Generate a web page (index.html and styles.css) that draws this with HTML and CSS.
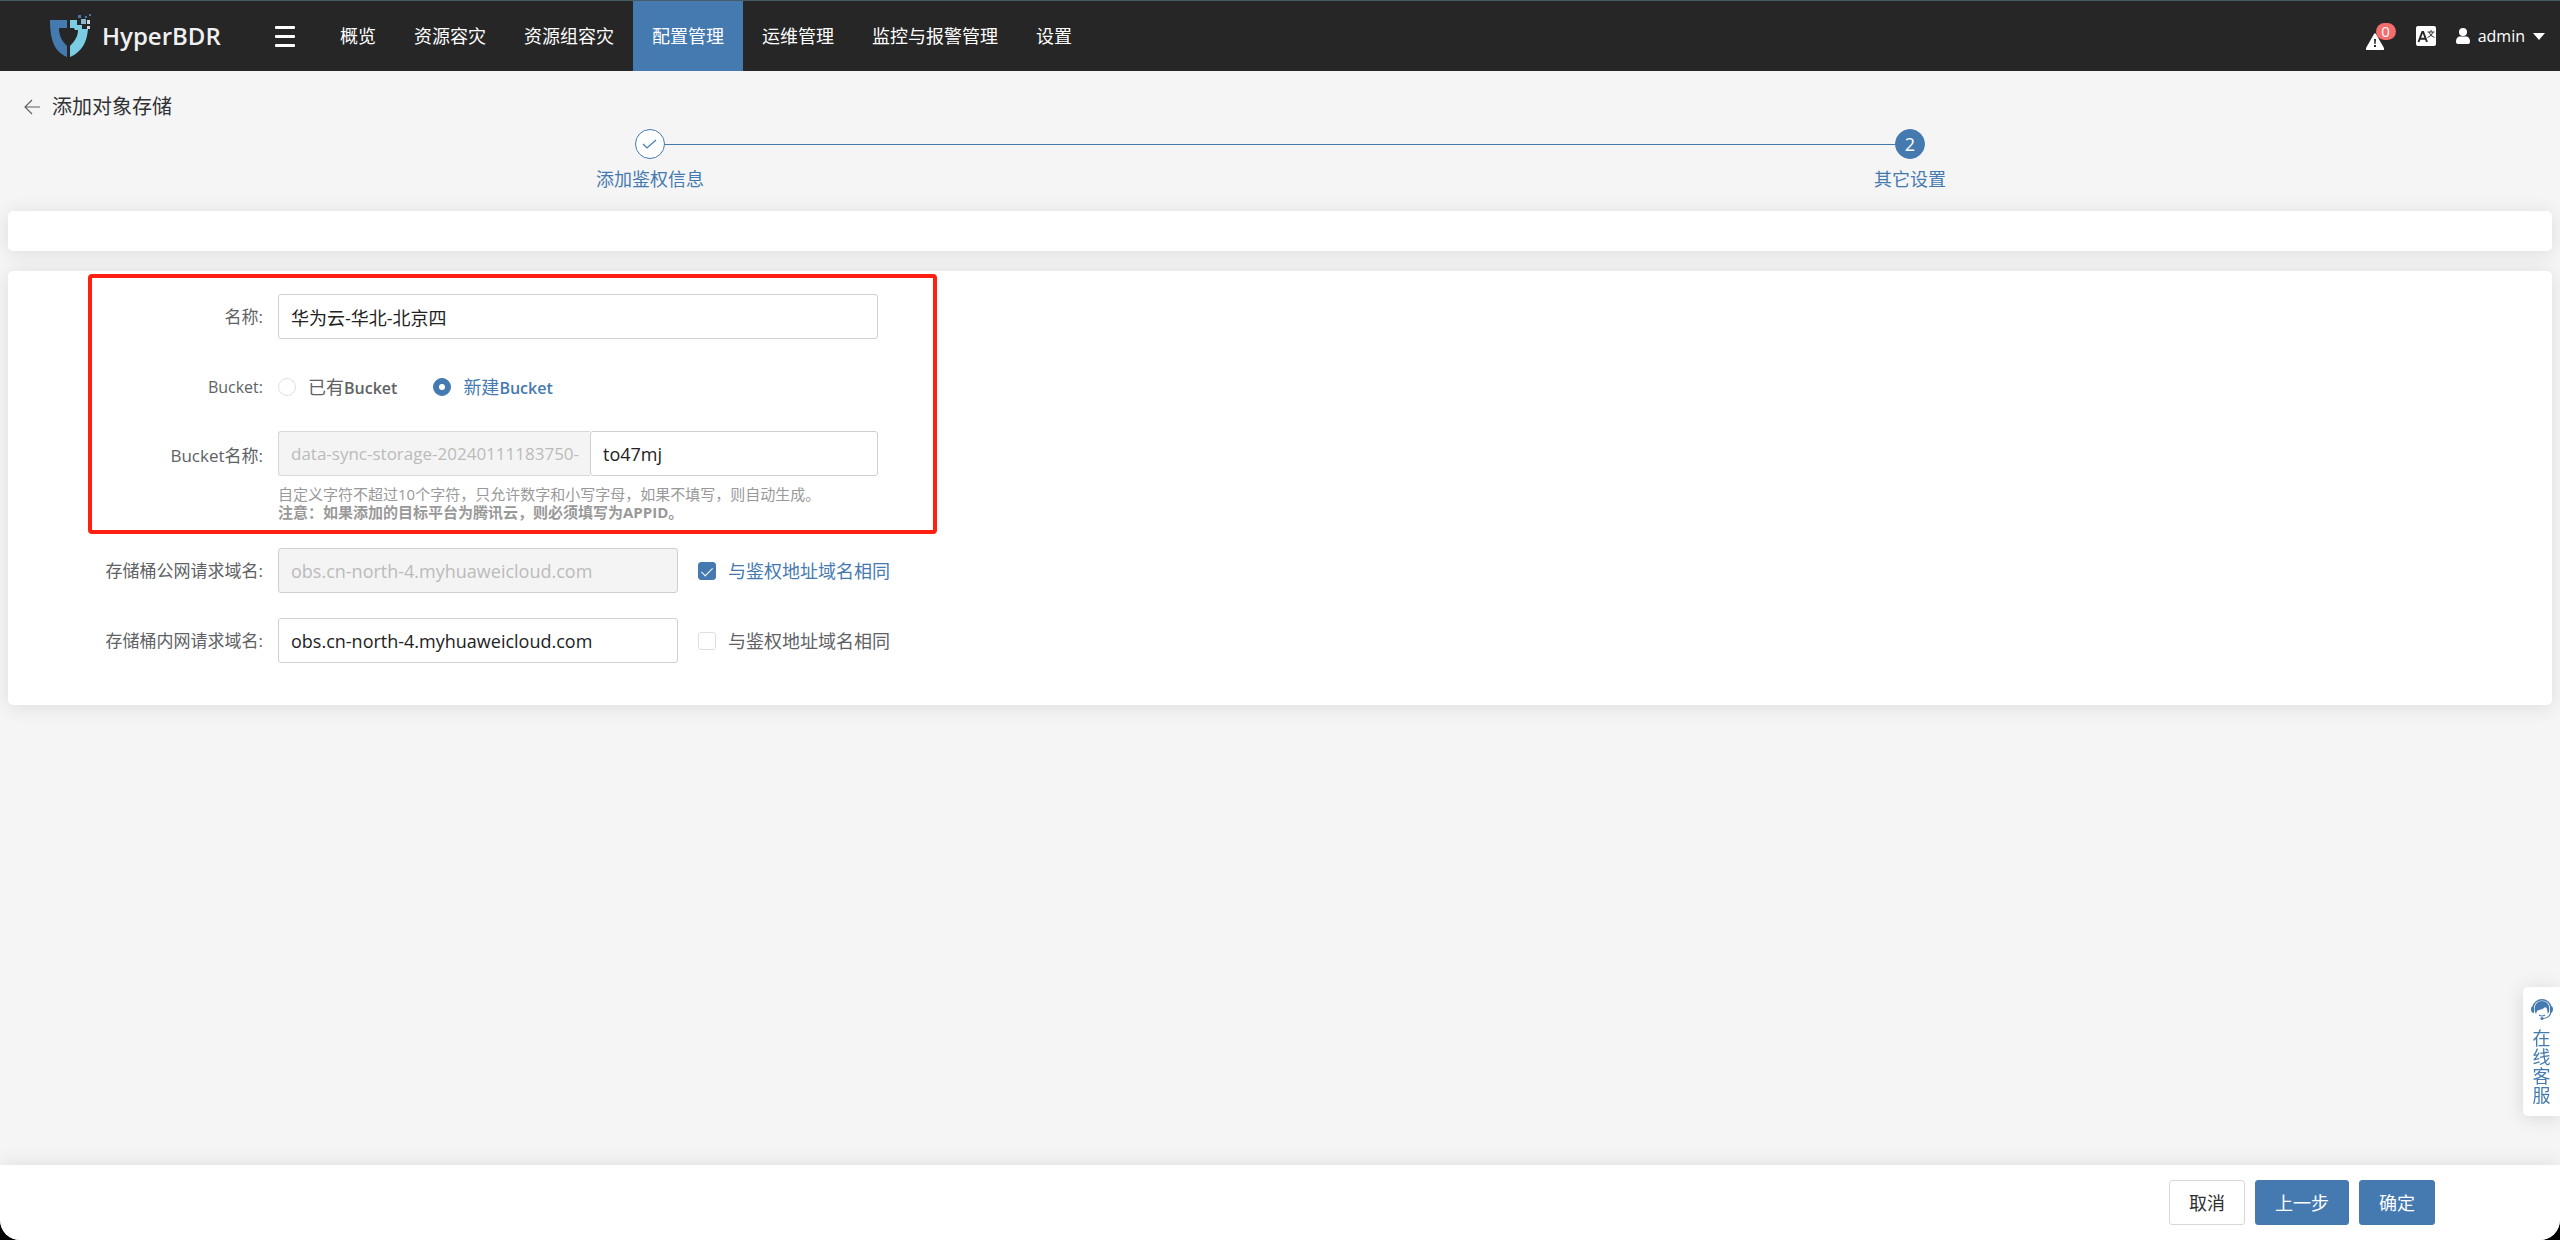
FILE: index.html
```html
<!DOCTYPE html>
<html lang="zh-CN">
<head>
<meta charset="utf-8">
<title>HyperBDR</title>
<link rel="stylesheet" href="styles.css">
</head>
<body>
<header class="topbar">
  <a class="brand" href="#">
    <svg class="brand-mark" viewBox="0 0 42 44" aria-hidden="true">
      <path fill="#457ab1" d="M1 6h17v8H10c0 8 3 13 8 18v11C6 38 1 27 1 6z"/>
      <path fill="#7bcde3" d="M21 6h7v5h5v4h6C38 28 33 38 21 43V32c5-5 8-10 8-16h-3l-1-2h-4z"/>
      <path fill="#8fb4cd" d="M32 5h5v5h-5z"/>
      <path fill="#457ab1" d="M29 1h3v3h-3zM36 2h2v2h-2zM40 0h2v2h-2z"/>
      <path fill="#c9d6e0" d="M38 6h3v4h-3zM38 12h3v3h-3z"/>
    </svg>
    <span class="brand-name">HyperBDR</span>
  </a>
  <button class="menu-toggle" type="button" aria-label="菜单"><span></span><span></span><span></span></button>
  <nav class="nav">
    <a href="#">概览</a>
    <a href="#">资源容灾</a>
    <a href="#">资源组容灾</a>
    <a class="active" href="#">配置管理</a>
    <a href="#">运维管理</a>
    <a href="#">监控与报警管理</a>
    <a href="#">设置</a>
  </nav>
  <div class="tools">
    <a class="alarm" href="#" aria-label="报警">
      <svg width="18" height="17" viewBox="0 0 18 17" aria-hidden="true"><path fill="#fff" d="M8 1q1-1.500 2 0l8 14q.5 2-1 2H1q-1.500 0-1-2z"/><path fill="#262626" d="M8 6h2l-.4 5H8.400zM8 12h2v2H8z"/></svg>
      <span class="badge">0</span>
    </a>
    <button class="lang" type="button" aria-label="语言">
      <svg width="20" height="20" viewBox="0 0 20 20" aria-hidden="true"><rect width="20" height="20" rx="2" fill="#fff"/><path d="M2.500 16L6.300 6h.9L11 16M4 12.800h5.500" fill="none" stroke="#262626" stroke-width="1.900"/><path d="M11.500 6h7M15 4v2M13 6q1 4 5.500 5.500M17 6q-1 4-5.500 5.500" fill="none" stroke="#262626" stroke-width=".9"/></svg>
    </button>
    <button class="user" type="button">
      <svg width="14" height="16" viewBox="0 0 14 16" aria-hidden="true"><circle cx="7" cy="4" r="4" fill="#fff"/><path fill="#fff" d="M0 14c0-4 2-5.500 4-5.500h6c2 0 4 1.500 4 5.500q0 2-2 2H2q-2 0-2-2z"/></svg>
      <span>admin</span>
      <svg width="12" height="7" viewBox="0 0 12 7" aria-hidden="true"><path fill="#fff" d="M0 0h12L6 7z"/></svg>
    </button>
  </div>
</header>

<main class="content">
  <div class="page-head">
    <a class="back" href="#" aria-label="返回"><svg width="16" height="16" viewBox="0 0 16 16" aria-hidden="true"><path d="M16 8H1M8 1L1 8l7 7" fill="none" stroke="#606266" stroke-width="1.200"/></svg></a>
    <h1>添加对象存储</h1>
  </div>
  <ol class="steps">
    <li class="step done">
      <div class="step-head"><span class="step-icon"><svg width="16" height="12" viewBox="0 0 16 12" aria-hidden="true"><path d="M1 6l4 4 9-8" fill="none" stroke="#457ab1" stroke-width="1.200"/></svg></span></div>
      <span class="step-title">添加鉴权信息</span>
    </li>
    <li class="step current">
      <div class="step-head"><span class="step-icon">2</span></div>
      <span class="step-title">其它设置</span>
    </li>
  </ol>
  <section class="card strip"></section>
  <form class="card form">
    <div class="marked">
      <div class="row">
        <label class="label" for="name">名称:</label>
        <input class="field wide" id="name" type="text" value="华为云-华北-北京四">
      </div>
      <div class="row options" role="radiogroup" aria-labelledby="bucket-label">
        <span class="label" id="bucket-label">Bucket:</span>
        <label class="choice"><input type="radio" name="bucket"><span>已有<b>Bucket</b></span></label>
        <label class="choice"><input type="radio" name="bucket" checked><span>新建<b>Bucket</b></span></label>
      </div>
      <div class="row top">
        <label class="label" for="bucket-name">Bucket名称:</label>
        <div class="wide">
          <div class="group">
            <span class="prefix">data-sync-storage-20240111183750-</span>
            <input class="field suffix" id="bucket-name" type="text" value="to47mj">
          </div>
          <p class="hint">自定义字符不超过10个字符，只允许数字和小写字母，如果不填写，则自动生成。<br><strong>注意：如果添加的目标平台为腾讯云，则必须填写为APPID。</strong></p>
        </div>
      </div>
    </div>
    <div class="row">
      <label class="label" for="public">存储桶公网请求域名:</label>
      <input class="field medium" id="public" type="text" value="obs.cn-north-4.myhuaweicloud.com" disabled>
      <label class="choice"><input type="checkbox" checked><span>与鉴权地址域名相同</span></label>
    </div>
    <div class="row">
      <label class="label" for="private">存储桶内网请求域名:</label>
      <input class="field medium" id="private" type="text" value="obs.cn-north-4.myhuaweicloud.com">
      <label class="choice"><input type="checkbox"><span>与鉴权地址域名相同</span></label>
    </div>
  </form>
</main>

<footer class="actions">
  <button class="btn" type="button">取消</button>
  <button class="btn primary" type="button">上一步</button>
  <button class="btn primary" type="button">确定</button>
</footer>

<a class="service" href="#">
  <svg width="22" height="22" viewBox="0 0 22 22" aria-hidden="true">
    <path d="M2 9a9.200 9.200 0 0 1 18 0" fill="none" stroke="#457ab1" stroke-width="1.400"/>
    <path fill="#457ab1" d="M4 14C2.500 7 6 3 11 3s8.500 4 7 11l-1.500 2c0-2 0-4-1-6l-1.500-1c-2 3-6 2-8 4L5 16zM0 11q0-3 3-3v7q-3 0-3-4zM22 11q0-3-3-3v7q3 0 3-4z"/>
    <path d="M20 14q-1 6-8 6.500M8 17q3 2 6 0" fill="none" stroke="#457ab1" stroke-width="1.200"/>
    <circle cx="11" cy="20.500" r="1.500" fill="#457ab1"/>
  </svg>
  <span>在线客服</span>
</a>
</body>
</html>
```

FILE: styles.css
```css
*, *::before, *::after { box-sizing: border-box; }

html { background: #000; }

body {
  margin: 0;
  min-height: 100vh;
  display: flex;
  flex-direction: column;
  background: #f5f5f5;
  border-radius: 0 0 20px 20px;
  color: #606266;
  font: 18px/24px "Open Sans", "Noto Sans CJK SC", sans-serif;
}

button, input { font: inherit; margin: 0; }
a { color: inherit; text-decoration: none; }
svg { display: block; flex: none; }
h1, p, ol { margin: 0; padding: 0; font-weight: 400; }

/* Top bar */
.topbar {
  display: flex;
  height: 71px;
  background: #262626;
  border-top: 1px solid #465d66;
  color: #fff;
}
.topbar button { padding: 0; border: 0; background: none; color: inherit; }
.brand {
  display: flex;
  align-items: center;
  gap: 11px;
  width: 275px;
  padding-left: 49px;
}
.brand-mark { width: 42px; height: 44px; }
.brand-name { font-size: 24px; font-weight: 600; color: #f0f0f0; }
.menu-toggle {
  display: flex;
  flex-direction: column;
  justify-content: center;
  gap: 6px;
  width: 20px;
  margin-right: 26px;
}
.menu-toggle span { height: 3px; background: #fff; border-radius: 1px; }
.nav { display: flex; }
.nav a { display: flex; align-items: center; padding: 0 19px; }
.nav .active { background: #457ab1; }
.tools {
  display: flex;
  align-items: center;
  margin-left: auto;
  padding-right: 15px;
  gap: 20px;
}
.alarm { position: relative; padding: 10px 12px 0 0; }
.badge {
  position: absolute;
  top: 0;
  right: 0;
  width: 20px;
  border-radius: 9px;
  background: #f56c6c;
  font-size: 15px;
  line-height: 17px;
  text-align: center;
}
.user { display: flex; align-items: center; gap: 8px; }
.topbar .user { font-size: 16px; }

/* Page heading and steps */
.content { flex: 1; padding: 0 8px; }
.page-head {
  display: flex;
  align-items: center;
  gap: 12px;
  padding: 22px 16px 0;
  color: #303133;
}
.page-head h1 { font-size: 20px; line-height: 28px; }
.steps {
  display: grid;
  grid-template-columns: 1fr 1fr;
  padding: 8px 12px 20px;
  list-style: none;
  color: #457ab1;
}
.step { text-align: center; }
.step-head { display: flex; align-items: center; }
.step-head::before, .step-head::after { content: ""; flex: 1; height: 1px; }
.done .step-head::after, .current .step-head::before { background: #457ab1; }
.step-icon {
  display: flex;
  align-items: center;
  justify-content: center;
  width: 30px;
  height: 30px;
  border: 1px solid #457ab1;
  border-radius: 50%;
  background: #fff;
}
.current .step-icon { background: #457ab1; color: #fff; }
.step-title { display: block; padding-top: 8px; }

/* Cards */
.card {
  background: #fff;
  border-radius: 5px;
  box-shadow: 0 2px 20px rgba(0, 0, 0, .1);
}
.strip { height: 40px; margin-bottom: 20px; }
.form { padding: 23px 0 42px; }

/* Form rows */
.marked { position: relative; margin-bottom: 25px; }
.marked::after {
  content: "";
  position: absolute;
  inset: -20px auto -11px 80px;
  width: 849px;
  border: 4px solid #ff2011;
  border-radius: 4px;
  pointer-events: none;
}
.row { display: flex; align-items: center; }
.row + .row { margin-top: 25px; }
.label {
  width: 255px;
  margin-right: 15px;
  font-size: 17px;
  text-align: right;
  white-space: nowrap;
}
.top { align-items: flex-start; }
.top .label { padding-top: 13px; }
.options { height: 42px; padding-top: 4px; }
.options .label { font-size: 16px; }
.wide { width: 600px; }
.medium { width: 400px; }
.field {
  height: 45px;
  padding: 0 12px;
  border: 1px solid #d0d0d0;
  border-radius: 3px;
  background: #fff;
  color: #222;
  outline: 0;
}
.field:disabled { background: #f4f4f4; color: #bbb; }
.group { display: flex; }
.prefix {
  width: 312px;
  padding-left: 12px;
  border: 1px solid #d8d8d8;
  border-right: 0;
  border-radius: 3px 0 0 3px;
  background: #f4f4f4;
  color: #bbb;
  font-size: 17px;
  line-height: 43px;
  white-space: nowrap;
}
.suffix { flex: 1; min-width: 0; }
.hint { padding: 9px 0 2px; color: #999; font-size: 15px; line-height: 18px; }

.choice { display: flex; align-items: center; gap: 12px; }
.choice + .choice { margin-left: 36px; }
.medium + .choice { margin-left: 20px; }
.choice b { font-size: 16px; font-weight: 600; }
.choice:has(:checked) { color: #457ab1; }
.choice input {
  appearance: none;
  display: grid;
  place-items: center;
  width: 18px;
  height: 18px;
  border: 1px solid #dcdfe6;
  border-radius: 3px;
  background: #fff;
}
.choice [type="radio"] { border-radius: 50%; }
.choice input:checked { background: #457ab1; border-color: #457ab1; }
.choice [type="radio"]:checked::after {
  content: "";
  width: 6px;
  height: 6px;
  border-radius: 50%;
  background: #fff;
}
.choice [type="checkbox"]:checked::after {
  content: "";
  width: 6px;
  height: 11px;
  border: solid #fff;
  border-width: 0 1px 1px 0;
  transform: rotate(45deg);
}

/* Footer actions */
.actions {
  display: flex;
  justify-content: flex-end;
  gap: 10px;
  padding: 15px 125px;
  background: #fff;
  border-radius: 0 0 20px 20px;
  box-shadow: 0 0 20px rgba(0, 0, 0, .1);
}
.btn {
  height: 45px;
  padding: 0 19px;
  border: 1px solid #d8d8d8;
  border-radius: 3px;
  background: #fff;
  color: #303133;
}
.primary { background: #457ab1; border-color: #457ab1; color: #fff; }

/* Online service tab */
.service {
  position: fixed;
  right: 0;
  bottom: 124px;
  display: flex;
  flex-direction: column;
  align-items: center;
  gap: 9px;
  width: 37px;
  padding: 11px 9px;
  border-radius: 5px 0 0 5px;
  background: #fff;
  box-shadow: 0 2px 20px rgba(0, 0, 0, .12);
  color: #457ab1;
  line-height: 19px;
}
.service span { width: 18px; }
```
